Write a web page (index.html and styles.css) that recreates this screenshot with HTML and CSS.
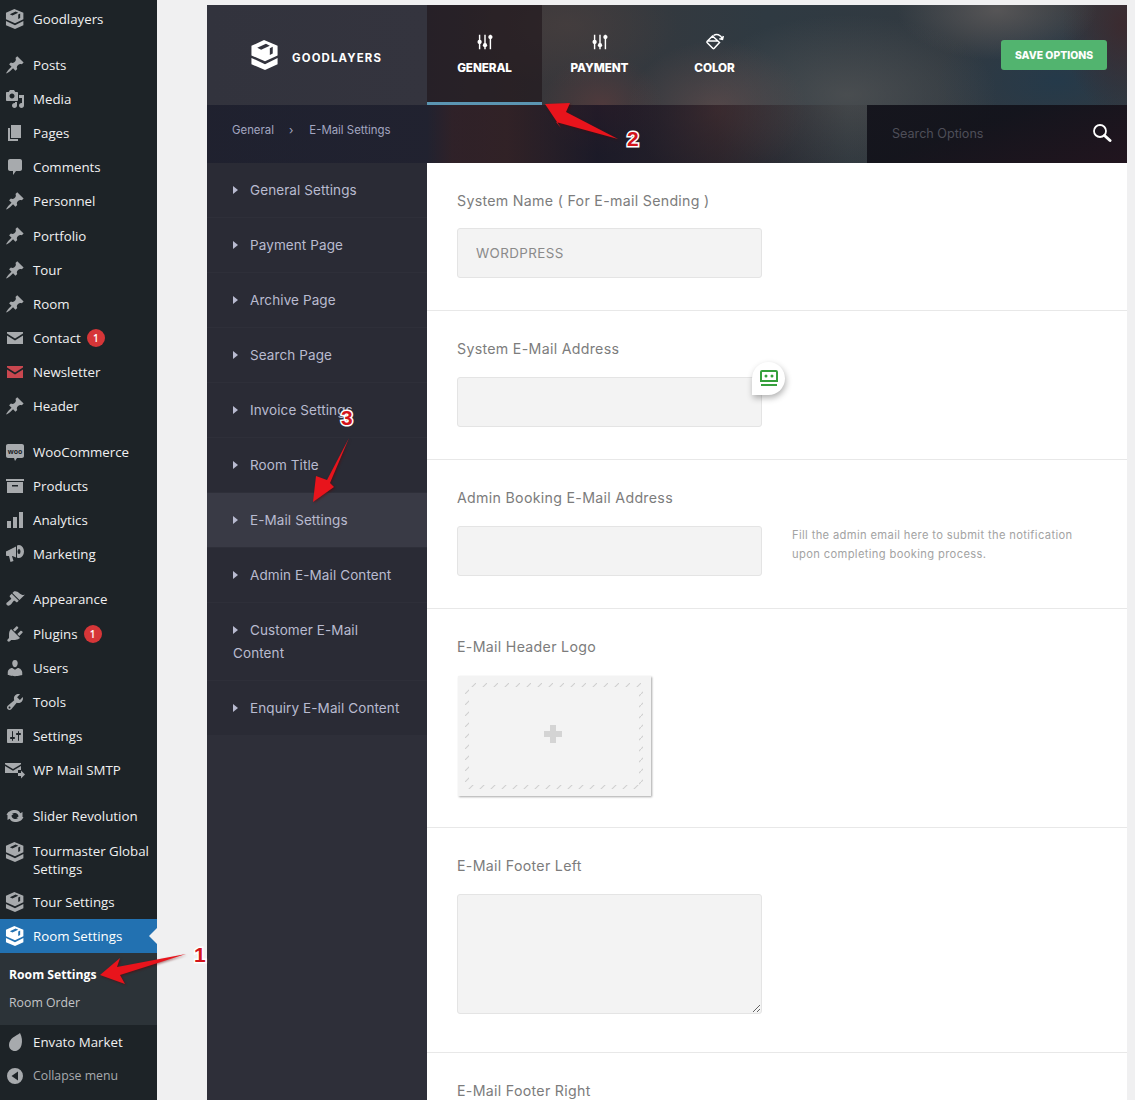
FILE: index.html
```html
<!DOCTYPE html>
<html lang="en">
<head>
  <meta charset="UTF-8" />
  <title>Room Settings</title>
  <link rel="stylesheet" href="styles.css">
</head>
<body>

  <svg class="defs" width="0" height="0">
    <defs>
      <pattern id="ticks" width="11" height="11" patternUnits="userSpaceOnUse">
        <path d="M0 11L11 0" stroke="#cfcfcf" stroke-width="1.100"/>
      </pattern>
    </defs>
    <symbol id="i-pin" viewBox="0 0 20 20"><path d="M10.44 3.02l1.82-1.82 6.36 6.35-1.83 1.82c-1.05-.68-2.48-.57-3.41.36l-.75.75c-.92.93-1.04 2.35-.35 3.41l-1.83 1.82-2.41-2.41-2.8 2.79c-.42.42-3.38 2.71-3.8 2.29s1.86-3.39 2.28-3.81l2.79-2.79L4.1 9.36l1.83-1.82c1.05.69 2.48.57 3.4-.36l.75-.75c.93-.92 1.05-2.35.36-3.41z"/></symbol>
    <symbol id="i-media" viewBox="0 0 20 20"><path d="M13 11V4c0-.55-.45-1-1-1h-1.67L9 1H5L3.67 3H2c-.55 0-1 .45-1 1v7c0 .55.45 1 1 1h10c.55 0 1-.45 1-1zM7 4.5c1.38 0 2.5 1.12 2.5 2.5S8.38 9.5 7 9.5 4.5 8.38 4.5 7 5.62 4.5 7 4.5zM14 6h5v10.5c0 1.38-1.12 2.5-2.5 2.5S14 17.88 14 16.5s1.12-2.5 2.5-2.5c.17 0 .34.02.5.05V9h-3V6zm-4 8.05V13h2v3.5c0 1.38-1.12 2.5-2.5 2.5S7 17.88 7 16.5 8.12 14 9.5 14c.17 0 .34.02.5.05z"/></symbol>
    <symbol id="i-pages" viewBox="0 0 20 20"><path d="M6 15V2h10v13H6zm-1 1h8v2H3V5h2v11z"/></symbol>
    <symbol id="i-comment" viewBox="0 0 20 20"><path d="M5 2h10c1.100 0 2 .9 2 2v8c0 1.100-.9 2-2 2h-4l-3 4v-4H5c-1.100 0-2-.9-2-2V4c0-1.100.9-2 2-2z"/></symbol>
    <symbol id="i-mail" viewBox="0 0 20 20"><path d="M2 4h16v1.500l-8 5-8-5V4zm0 3.500l8 5 8-5V16H2V7.500z"/></symbol>
    <symbol id="i-box" viewBox="0 0 20 20"><path d="M1 3h18v2H1V3zm1 3h16v11H2V6zm5 3v1.500h6V9H7z"/></symbol>
    <symbol id="i-bars" viewBox="0 0 20 20"><path d="M2 11h4v7H2v-7zm6-4h4v11H8V7zm6-5h4v16h-4V2z"/></symbol>
    <symbol id="i-horn" viewBox="0 0 20 20"><path d="M2 7l9-4.500v11L7.500 12l-.5 0 1.500 5-3 1L4 12H2c-.6 0-1-.5-1-1V8c0-.5.4-1 1-1z"/><path d="M14 1a5 6.500 0 1 1 0 13 5 6.500 0 0 1-2-.5V1.500c.6-.3 1.300-.5 2-.5zm0 4a1.500 2.500 0 1 0 0 5 1.500 2.500 0 0 0 0-5z" fill-rule="evenodd"/></symbol>
    <symbol id="i-brush" viewBox="0 0 20 20"><path d="M14.480 11.060L7.410 3.990l1.500-1.500c.5-.56 2.300-.47 3.510.32 1.210.8 1.430 1.280 2.910 2.100 1.180.64 2.450 1.260 4.450.85zm-.71.71L6.700 4.700 4.930 6.470c-.39.39-.39 1.020 0 1.410l1.060 1.060c.39.39.39 1.030 0 1.420-.6.6-1.430 1.110-2.210 1.690-.35.26-.7.53-1.010.84C1.430 13.230.64 14.700 1.960 16c1.300 1.300 2.780.52 4.110-.82.31-.31.58-.66.84-1.010.58-.78 1.090-1.610 1.690-2.210.39-.39 1.030-.39 1.420 0l1.060 1.060c.39.39 1.020.39 1.410 0z"/></symbol>
    <symbol id="i-plug" viewBox="0 0 20 20"><path d="M13.110 4.360L9.870 7.600 8 5.730l3.240-3.240c.35-.34 1.050-.2 1.560.32.52.51.66 1.210.31 1.550zm-8 1.770l.91-1.120 9.010 9.010-1.190.84c-.71.71-2.630 1.160-3.820 1.160H6.140L4.900 17.260c-.59.59-1.540.59-2.120 0-.59-.58-.59-1.530 0-2.120l1.240-1.240v-3.880c0-1.130.4-3.190 1.090-3.890zm7.260 3.970l3.240-3.240c.34-.35 1.040-.21 1.550.31.52.51.66 1.210.31 1.550l-3.240 3.250z"/></symbol>
    <symbol id="i-user" viewBox="0 0 20 20"><path d="M10 9.250c-2.270 0-2.730-3.440-2.730-3.440C7 4.020 7.820 2 9.970 2c2.160 0 2.980 2.020 2.710 3.810 0 0-.41 3.440-2.680 3.440zm0 2.570L12.720 10c2.390 0 4.520 2.330 4.520 4.530v2.490s-3.650 1.130-7.240 1.130c-3.650 0-7.240-1.130-7.240-1.130v-2.490c0-2.250 1.940-4.480 4.470-4.480z"/></symbol>
    <symbol id="i-wrench" viewBox="0 0 20 20"><path d="M16.680 9.770c-1.340 1.340-3.300 1.670-4.950.99l-5.410 6.520c-.99.99-2.590.99-3.580 0s-.99-2.590 0-3.570l6.520-5.420c-.68-1.650-.35-3.610.99-4.950 1.280-1.280 3.120-1.620 4.720-1.060l-2.890 2.890 2.820 2.820 2.860-2.870c.53 1.580.18 3.390-1.080 4.650zM3.810 16.210c.4.39 1.040.39 1.430 0 .4-.4.4-1.040 0-1.430-.39-.4-1.030-.4-1.430 0-.39.39-.39 1.030 0 1.430z"/></symbol>
    <symbol id="i-sliders" viewBox="0 0 20 20"><path d="M18 16V4c0-.55-.45-1-1-1H3c-.55 0-1 .45-1 1v12c0 .55.45 1 1 1h14c.55 0 1-.45 1-1zM8 11h1c.55 0 1 .45 1 1s-.45 1-1 1H8v1.500c0 .28-.22.5-.5.5s-.5-.22-.5-.5V13H6c-.55 0-1-.45-1-1s.45-1 1-1h1V5.500c0-.28.22-.5.5-.5s.5.22.5.5V11zm5-2h-1c-.55 0-1-.45-1-1s.45-1 1-1h1V5.500c0-.28.22-.5.5-.5s.5.22.5.5V7h1c.55 0 1 .45 1 1s-.45 1-1 1h-1v5.500c0 .28-.22.5-.5.5s-.5-.22-.5-.5V9z"/></symbol>
    <symbol id="i-send" viewBox="0 0 20 20"><path d="M0 3h16v1.200L8 9 0 4.200V3zm0 3l8 4.800L16 6v4h-3v3H0V6z"/><path d="M13 11h3V8.500l4 4-4 4V14h-3v-3z" transform="translate(0 2)"/></symbol>
    <symbol id="i-sync" viewBox="0 0 20 20"><path d="M10 4a6 6 0 0 1 5.300 3.200L17.500 6v6h-6l2-1.400A3.900 3.900 0 0 0 6.200 9H1.600C2.300 6 5.800 4 10 4z"/><path d="M10 16a6 6 0 0 1-5.300-3.200L2.500 14V8h6l-2 1.400A3.900 3.900 0 0 0 13.800 11h4.600c-.7 3-4.200 5-8.400 5z"/></symbol>
    <symbol id="i-cube" viewBox="0 0 28 31"><path d="M13 0L27 6V16L14 22L0 16V6ZM6 8L10 10L19 6L15 4ZM19 8.500V15.500L22 14V7Z" fill-rule="evenodd"/><path d="M0 18.500L14 25L27 18.500V25L14 31L0 25Z"/></symbol>
    <symbol id="i-leaf" viewBox="0 0 20 20"><path d="M15 1c2 4 2.500 8 1.500 12-.9 3.500-3.500 6-6.500 6-3.500 0-6-2.500-6-6 0-3 1.500-5.500 4-7.500C10 4 13 2.500 15 1z"/></symbol>
    <symbol id="i-collapse" viewBox="0 0 20 20"><path d="M10 2a8 8 0 1 1 0 16 8 8 0 0 1 0-16zm3 3.500L6.500 10l6.500 4.500v-9z" fill-rule="evenodd"/></symbol>
    <symbol id="i-tune" viewBox="0 0 20 20"><path d="M4 2v16M10 2v16M16 2v16" stroke="#fff" stroke-width="1.600" fill="none"/><circle cx="4" cy="10" r="2.400" fill="#fff"/><circle cx="10" cy="13.500" r="2.400" fill="#fff"/><circle cx="16" cy="4.500" r="2.400" fill="#fff"/></symbol>
    <symbol id="i-bucket" viewBox="0 0 20 18"><path d="M2.500 8.500L8 3L15 9.500L9.500 15.500Q9 16 8.500 15.500L3 10Q2 9 2.500 8.500ZM3 8H13.500M9 2.500C12 .5 16 1.500 18 6M14.800 5.700L18 6.300L18.800 3" stroke="#fff" stroke-width="1.500" fill="none"/></symbol>
  </svg>

  <nav class="adminmenu">
    <ul class="menu-group first">
      <li><svg class="mi"><use href="#i-cube"/></svg>Goodlayers</li>
    </ul>
    <ul class="menu-group">
      <li><svg class="mi"><use href="#i-pin"/></svg>Posts</li>
      <li><svg class="mi"><use href="#i-media"/></svg>Media</li>
      <li><svg class="mi"><use href="#i-pages"/></svg>Pages</li>
      <li><svg class="mi"><use href="#i-comment"/></svg>Comments</li>
      <li><svg class="mi"><use href="#i-pin"/></svg>Personnel</li>
      <li><svg class="mi"><use href="#i-pin"/></svg>Portfolio</li>
      <li><svg class="mi"><use href="#i-pin"/></svg>Tour</li>
      <li><svg class="mi"><use href="#i-pin"/></svg>Room</li>
      <li><svg class="mi"><use href="#i-mail"/></svg>Contact <span class="count">1</span></li>
      <li><svg class="mi red"><use href="#i-mail"/></svg>Newsletter</li>
      <li><svg class="mi"><use href="#i-pin"/></svg>Header</li>
    </ul>
    <ul class="menu-group">
      <li>
        <svg class="mi" viewBox="0 0 20 20"><path d="M3 2h14c1.100 0 2 .9 2 2v10c0 1.100-.9 2-2 2h-5l-2 3-1-3H3c-1.100 0-2-.9-2-2V4c0-1.100.9-2 2-2z"/><text x="10" y="11.500" class="woo-text">woo</text></svg>WooCommerce
      </li>
      <li><svg class="mi"><use href="#i-box"/></svg>Products</li>
      <li><svg class="mi"><use href="#i-bars"/></svg>Analytics</li>
      <li><svg class="mi"><use href="#i-horn"/></svg>Marketing</li>
    </ul>
    <ul class="menu-group">
      <li><svg class="mi"><use href="#i-brush"/></svg>Appearance</li>
      <li><svg class="mi"><use href="#i-plug"/></svg>Plugins <span class="count">1</span></li>
      <li><svg class="mi"><use href="#i-user"/></svg>Users</li>
      <li><svg class="mi"><use href="#i-wrench"/></svg>Tools</li>
      <li><svg class="mi"><use href="#i-sliders"/></svg>Settings</li>
      <li><svg class="mi"><use href="#i-send"/></svg>WP Mail SMTP</li>
    </ul>
    <ul class="menu-group">
      <li><svg class="mi"><use href="#i-sync"/></svg>Slider Revolution</li>
      <li class="tall"><svg class="mi"><use href="#i-cube"/></svg><span>Tourmaster Global Settings</span></li>
      <li><svg class="mi"><use href="#i-cube"/></svg>Tour Settings</li>
      <li class="current"><svg class="mi"><use href="#i-cube"/></svg>Room Settings</li>
    </ul>
    <ul class="submenu">
      <li class="on">Room Settings</li>
      <li>Room Order</li>
    </ul>
    <ul class="menu-group flush">
      <li><svg class="mi"><use href="#i-leaf"/></svg>Envato Market</li>
      <li class="collapse"><svg class="mi"><use href="#i-collapse"/></svg>Collapse menu</li>
    </ul>
  </nav>

  <main class="panel">
    <div class="panel-top">
      <header class="panel-head">
        <div class="logo">
          <svg class="logo-mark"><use href="#i-cube"/></svg>
          <span>GOODLAYERS</span>
        </div>
        <div class="tab active"><svg><use href="#i-tune"/></svg>GENERAL</div>
        <div class="tab"><svg><use href="#i-tune"/></svg>PAYMENT</div>
        <div class="tab"><svg><use href="#i-bucket"/></svg>COLOR</div>
        <button class="save">SAVE OPTIONS</button>
      </header>
      <div class="panel-sub">
        <div class="crumbs"><span>General</span><span class="sep">›</span><span>E-Mail Settings</span></div>
        <div class="search">
          <span>Search Options</span>
          <svg width="20" height="20" viewBox="0 0 20 20"><circle cx="8" cy="8" r="6" fill="none" stroke="#fff" stroke-width="1.800"/><path d="M12.500 12.500l5.500 5" stroke="#fff" stroke-width="3" stroke-linecap="round"/></svg>
        </div>
      </div>
    </div>

    <div class="panel-body">
      <ul class="side-nav">
        <li>General Settings</li>
        <li>Payment Page</li>
        <li>Archive Page</li>
        <li>Search Page</li>
        <li>Invoice Settings</li>
        <li>Room Title</li>
        <li class="active">E-Mail Settings</li>
        <li>Admin E-Mail Content</li>
        <li>Customer E-Mail Content</li>
        <li>Enquiry E-Mail Content</li>
      </ul>

      <div class="options">
        <section class="option">
          <h4>System Name ( For E-mail Sending )</h4>
          <input type="text" value="WORDPRESS" />
        </section>
        <section class="option">
          <h4>System E-Mail Address</h4>
          <div class="field">
            <input type="text" />
            <span class="pw-badge">
              <svg width="18" height="17" viewBox="0 0 18 17"><path d="M2 1h14c.6 0 1 .4 1 1v9H1V2c0-.6.4-1 1-1z" fill="none" stroke="#35a03c" stroke-width="2"/><circle cx="6" cy="6" r="1.500" fill="#35a03c"/><circle cx="12" cy="6" r="1.500" fill="#35a03c"/><rect x="1" y="14" width="16" height="2" fill="#35a03c"/></svg>
            </span>
          </div>
        </section>
        <section class="option">
          <h4>Admin Booking E-Mail Address</h4>
          <div class="field">
            <input type="text" />
            <p class="hint">Fill the admin email here to submit the notification upon completing booking process.</p>
          </div>
        </section>
        <section class="option logo-option">
          <h4>E-Mail Header Logo</h4>
          <div class="upload">
            <svg class="upload-dash" width="178" height="106"><rect x="2" y="2" width="174" height="102" /></svg>
            <span class="plus"></span>
          </div>
        </section>
        <section class="option text-option">
          <h4>E-Mail Footer Left</h4>
          <textarea></textarea>
        </section>
        <section class="option">
          <h4>E-Mail Footer Right</h4>
        </section>
      </div>
    </div>
  </main>

  <!-- red notes drawn on top of the screenshot -->
  <svg class="arrows" width="1135" height="1100">
    <polygon points="186,954 117,967 120,958 100,975 125,984 120,975" />
    <polygon points="545,104 570,103 566,112 618,139 556,122 561,128" />
    <polygon points="349,438 327,480 316,476 313,502 334,487 330,483" />
  </svg>
  <span class="note note-1">1</span>
  <span class="note note-2">2</span>
  <span class="note note-3">3</span>

</body>
</html>
```

FILE: styles.css
```css
* {
  box-sizing: border-box;
}

html, body {
  height: 1100px;
  overflow: hidden;
}

body {
  position: relative;
  margin: 0;
  display: flex;
  background-color: #f0f0f1;
  font-family: "Open Sans", sans-serif;
}

ul {
  list-style: none;
  margin: 0;
  padding: 0;
}

.defs {
  position: absolute;
}

.woo-text {
  font: bold 7px "Open Sans", sans-serif;
  text-anchor: middle;
  fill: #1d2327;
}

/* admin menu */
.adminmenu {
  width: 157px;
  height: 1100px;
  flex-shrink: 0;
  background-color: #1d2327;
  color: #f0f0f1;
  font-size: 13.3px;
}

.menu-group {
  margin-top: 11px;
}

.menu-group.first {
  margin-top: 2.3px;
}

.menu-group.flush {
  margin-top: 0;
}

.menu-group li {
  display: flex;
  align-items: center;
  height: 34.2px;
  white-space: nowrap;
  line-height: 18px;
}

.menu-group li.tall {
  height: 52px;
  white-space: normal;
  align-items: flex-start;
  padding-top: 9px;
}

.mi {
  width: 20px;
  height: 20px;
  margin: 0 8px 0 5px;
  flex-shrink: 0;
  fill: #a7aaad;
}

.mi.red {
  fill: #c9474f;
}

.count {
  display: inline-block;
  width: 18px;
  height: 18px;
  margin-left: 6px;
  border-radius: 50%;
  background-color: #d63638;
  color: #fff;
  font-size: 10px;
  font-weight: 600;
  line-height: 18px;
  text-align: center;
}

.menu-group li.current {
  position: relative;
  background-color: #2271b1;
  color: #fff;
}

.current .mi {
  fill: #fff;
}

.current::after {
  content: "";
  position: absolute;
  right: 0;
  top: 9px;
  border: 8px solid transparent;
  border-right-color: #f0f0f1;
  border-left-width: 0;
}

.submenu {
  height: 72px;
  padding-top: 8px;
  background-color: #2c3338;
  color: #c3c4c7;
  font-size: 12.3px;
}

.submenu li {
  height: 28px;
  padding-left: 9px;
  line-height: 28px;
}

.submenu .on {
  color: #fff;
  font-weight: 700;
  font-size: 12.2px;
}

.collapse {
  color: #a7aaad;
  font-size: 12.3px;
}

/* goodlayers panel */
.panel {
  width: 920px;
  margin: 5px 0 0 50px;
  flex-shrink: 0;
  background-color: #fff;
  font-family: Inter, sans-serif;
}

.panel-top {
  background:
    radial-gradient(60px 50px at 395px 100px, rgba(100, 60, 60, .55), transparent),
    radial-gradient(90px 70px at 510px 105px, rgba(95, 75, 75, .75), transparent),
    radial-gradient(150px 80px at 640px 90px, rgba(90, 90, 90, .6), transparent),
    radial-gradient(100px 50px at 790px 5px, rgba(95, 92, 92, .8), transparent),
    radial-gradient(60px 90px at 915px 20px, rgba(60, 40, 45, .85), transparent),
    radial-gradient(120px 70px at 850px 75px, rgba(35, 58, 75, .9), transparent),
    radial-gradient(110px 60px at 360px 20px, rgba(70, 62, 62, .8), transparent),
    linear-gradient(90deg, #32333d 0, #34343e 220px, #3a3639 300px, #33393f 460px, #2f3a42 560px, #34393f 920px);
}

.panel-head {
  display: flex;
  align-items: stretch;
  height: 100px;
}

.logo {
  width: 220px;
  display: flex;
  align-items: center;
  gap: 13px;
  padding: 6px 0 0 44px;
  color: #fff;
  font-size: 11.4px;
  font-weight: 700;
  letter-spacing: 1.15px;
}

.logo-mark {
  width: 28px;
  height: 30px;
  margin-top: -6px;
  fill: #fff;
}

.tab {
  width: 115px;
  display: flex;
  flex-direction: column;
  align-items: center;
  padding-top: 28px;
  color: #fff;
  font-size: 11.7px;
  font-weight: 800;
  letter-spacing: -.1px;
}

.tab svg {
  width: 18px;
  height: 18px;
  margin-bottom: 10px;
}

.tab:last-of-type svg {
  width: 21px;
}

.tab.active {
  background-color: rgba(30, 20, 25, .6);
  border-bottom: 3px solid #5b95b2;
}

.save {
  width: 106px;
  height: 30px;
  margin: 35px 20px 0 auto;
  border: none;
  border-radius: 3px;
  background-color: #52b46f;
  color: #fff;
  font-family: Inter, sans-serif;
  font-size: 10.4px;
  font-weight: 800;
}

.panel-sub {
  display: flex;
  height: 58px;
  background: linear-gradient(90deg, rgba(20, 22, 38, .62) 0, rgba(20, 22, 38, .6) 220px, rgba(40, 14, 20, .5) 245px, rgba(40, 14, 20, .5) 300px, rgba(15, 12, 30, .68) 390px, rgba(30, 12, 20, .5) 510px, rgba(40, 35, 35, .12) 640px);
}

.crumbs {
  flex: 1;
  display: flex;
  align-items: center;
  padding: 0 0 9px 25px;
  color: #a3a6c0;
  font-size: 11.4px;
}

.sep {
  margin: 0 16px 0 15px;
}

.search {
  width: 260px;
  display: flex;
  align-items: center;
  justify-content: space-between;
  padding: 0 15px 2px 25px;
  background: linear-gradient(160deg, rgba(18, 18, 26, .92) 40%, rgba(32, 18, 28, .92));
  color: #4e4e58;
  font-size: 12.6px;
}

.panel-body {
  display: flex;
}

.side-nav {
  width: 220px;
  height: 937px;
  flex-shrink: 0;
  background-color: #2e2f39;
  color: #b9bbd0;
  font-size: 13.5px;
  letter-spacing: .1px;
}

.side-nav li {
  height: 55px;
  padding: 16px 20px 0 26px;
  background-color: #2a2b35;
  border-bottom: 1px solid #2e2f39;
  line-height: 23px;
}

.side-nav li:nth-child(9) {
  height: 78px;
}

.side-nav li::before {
  content: "";
  display: inline-block;
  margin-right: 12px;
  vertical-align: 1px;
  border: 4px solid transparent;
  border-left: 5px solid #b9bbd0;
  border-right-width: 0;
}

.side-nav .active {
  background-color: #393a45;
}

.options {
  flex: 1;
}

.option {
  padding: 28px 30px 32px;
  border-bottom: 1px solid #e8e8e8;
}

.option:first-child h4 {
  margin-bottom: 17px;
}

.option:last-child {
  border-bottom: none;
}

.option h4 {
  margin: 0 0 18px;
  color: #7c7c7c;
  font-size: 14.2px;
  font-weight: 400;
  letter-spacing: .3px;
  line-height: 20px;
}

.logo-option {
  padding-bottom: 31px;
}

.logo-option h4 {
  margin-bottom: 19px;
}

.text-option {
  padding-bottom: 38px;
}

.field {
  position: relative;
  display: flex;
  gap: 30px;
}

input, textarea {
  display: block;
  width: 305px;
  height: 50px;
  flex-shrink: 0;
  padding: 0 18px;
  border: 1px solid #e4e4e4;
  border-radius: 3px;
  background-color: #f3f3f3;
  color: #8a8a8a;
  font-family: Inter, sans-serif;
  font-size: 13.4px;
  letter-spacing: .4px;
}

textarea {
  height: 120px;
}

.hint {
  width: 290px;
  margin: 0;
  color: #a3a3a3;
  font-size: 11.2px;
  letter-spacing: .35px;
  line-height: 19px;
}

.pw-badge {
  position: absolute;
  left: 295px;
  top: -15px;
  width: 33px;
  height: 33px;
  display: flex;
  align-items: center;
  justify-content: center;
  border-radius: 50% 50% 50% 0;
  background-color: #fff;
  box-shadow: 1px 3px 6px rgba(0, 0, 0, .3);
}

.upload {
  position: relative;
  width: 193px;
  height: 120px;
  margin-left: 1px;
  display: flex;
  align-items: center;
  justify-content: center;
  background-color: #f3f3f3;
  box-shadow: 1px 1px 2px rgba(0, 0, 0, .35);
}

.upload-dash {
  position: absolute;
  left: 7px;
  top: 7px;
}

.upload-dash rect {
  fill: none;
  stroke: url(#ticks);
  stroke-width: 4;
}

.plus {
  width: 18px;
  height: 18px;
  margin: -4px 0 0 -4px;
  background:
    linear-gradient(#d4d4d4, #d4d4d4) center / 18px 6px no-repeat,
    linear-gradient(#d4d4d4, #d4d4d4) center / 6px 18px no-repeat;
}

/* annotations */
.arrows {
  position: absolute;
  left: 0;
  top: 0;
  pointer-events: none;
  fill: #e8141c;
  filter: drop-shadow(1px 1px 1px rgba(90, 0, 0, .5));
}

.note {
  position: absolute;
  color: #d3141b;
  font-family: "Liberation Sans", sans-serif;
  font-size: 21px;
  font-weight: 700;
  line-height: 24px;
  -webkit-text-stroke: 3px #fff;
  paint-order: stroke fill;
}

.note-1 {
  left: 194px;
  top: 943px;
}

.note-2 {
  left: 627px;
  top: 127px;
}

.note-3 {
  left: 341px;
  top: 406px;
}
```
